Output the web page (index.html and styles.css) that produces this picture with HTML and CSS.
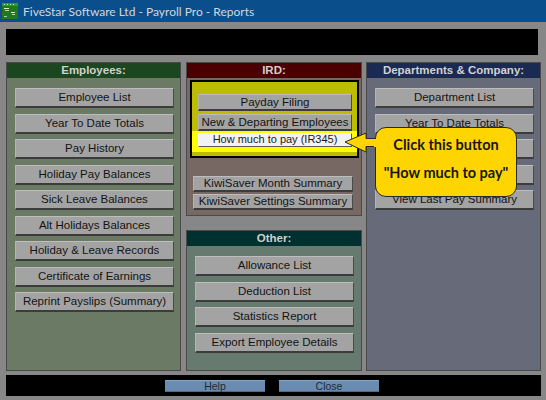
FILE: index.html
```html
<!DOCTYPE html>
<html>
<head>
<meta charset="utf-8">
<link rel="stylesheet" href="styles.css">
</head>
<body>
<div class="window">
  <div class="titlebar">
    <svg class="appicon" width="16" height="16" viewBox="0 0 16 16">
      <rect x="0" y="0" width="16" height="16" fill="#1f7a1f"/>
      <rect x="0" y="0" width="16" height="3" fill="#2f9a2f"/>
      <rect x="2" y="1" width="1" height="1" fill="#cfe8cf"/>
      <rect x="5" y="1" width="1" height="1" fill="#cfe8cf"/>
      <rect x="8" y="1" width="1" height="1" fill="#cfe8cf"/>
      <rect x="11" y="1" width="1" height="1" fill="#cfe8cf"/>
      <rect x="2" y="5" width="5" height="1" fill="#d8ecd8"/>
      <rect x="3" y="7" width="4" height="1" fill="#b8d8b8"/>
      <rect x="9" y="9" width="4" height="1" fill="#d8ecd8"/>
      <rect x="10" y="11" width="3" height="1" fill="#b8d8b8"/>
      <rect x="2" y="13" width="3" height="1" fill="#a8cca8"/>
    </svg>
    <span class="title">FiveStar Software Ltd - Payroll Pro - Reports</span>
  </div>
  <div class="content">
    <div class="topbar"></div>
    <div class="columns">
      <section class="panel emp">
        <div class="phead">Employees:</div>
        <div class="pbody list">
          <div class="btn">Employee List</div>
          <div class="btn">Year To Date Totals</div>
          <div class="btn">Pay History</div>
          <div class="btn">Holiday Pay Balances</div>
          <div class="btn">Sick Leave Balances</div>
          <div class="btn">Alt Holidays Balances</div>
          <div class="btn">Holiday &amp; Leave Records</div>
          <div class="btn">Certificate of Earnings</div>
          <div class="btn">Reprint Payslips (Summary)</div>
        </div>
      </section>
      <div class="midcol">
        <section class="panel ird">
          <div class="phead">IRD:</div>
          <div class="ybox">
            <div class="btn sm">Payday Filing</div>
            <div class="btn sm">New &amp; Departing Employees</div>
            <div class="band">
              <div class="btn hl">How much to pay (IR345)</div>
            </div>
          </div>
          <div class="kiwi">
            <div class="btn ks">KiwiSaver Month Summary</div>
            <div class="btn ks">KiwiSaver Settings Summary</div>
          </div>
        </section>
        <section class="panel other">
          <div class="phead">Other:</div>
          <div class="pbody list">
            <div class="btn">Allowance List</div>
            <div class="btn">Deduction List</div>
            <div class="btn">Statistics Report</div>
            <div class="btn">Export Employee Details</div>
          </div>
        </section>
      </div>
      <section class="panel dept">
        <div class="phead">Departments &amp; Company:</div>
        <div class="pbody list">
          <div class="btn">Department List</div>
          <div class="btn">Year To Date Totals</div>
          <div class="btn"></div>
          <div class="btn"></div>
          <div class="btn">View Last Pay Summary</div>
        </div>
      </section>
    </div>
    <div class="bottombar">
      <div class="fbtn help">Help</div>
      <div class="fbtn close">Close</div>
    </div>
  </div>

  <svg class="arrow" width="36" height="26" viewBox="0 0 36 26">
    <polygon points="2,12 23,3 23,8.5 34,8.5 34,16.5 23,16.5 23,22" fill="#ffd500" stroke="#2a2a2a" stroke-width="1" stroke-linejoin="miter"/>
  </svg>
  <div class="callout">
    <div class="c1">Click this button</div>
    <div class="c2">"How much to pay"</div>
  </div>
  <svg class="arrowjoin" width="6" height="8" viewBox="0 0 6 8"><rect width="6" height="8" fill="#ffd500"/></svg>
</div>
</body>
</html>
```
FILE: styles.css
```css
* { box-sizing: border-box; }
html, body { margin: 0; padding: 0; }
body {
  width: 546px;
  height: 400px;
  background: #878787;
  font-family: "Liberation Sans", Arial, sans-serif;
  overflow: hidden;
}
.window {
  position: relative;
  width: 546px;
  height: 400px;
}
.titlebar {
  height: 22px;
  background: #0a4e8b;
  display: flex;
  align-items: center;
  padding-left: 2px;
}
.appicon { display: block; margin-right: 5px; }
.title {
  font-family: "Lato", "Open Sans", sans-serif;
  font-size: 12px;
  color: #d2d6da;
}
.content {
  padding: 0 5px 0 6px;
}
.topbar {
  margin-top: 7px;
  height: 26px;
  width: 532px;
  background: #000;
}
.columns {
  margin-top: 7px;
  height: 309px;
  display: flex;
  gap: 5px;
}
.panel {
  border: 1px solid #4a4a4a;
  display: flex;
  flex-direction: column;
}
.phead {
  height: 15px;
  font-weight: bold;
  font-size: 11.5px;
  line-height: 15px;
  text-align: center;
  color: #cfd2cf;
}
.emp { width: 175px; background: #6a7a64; }
.emp .phead { background: #1b4620; }
.dept { width: 175px; background: #676b79; margin-left: -1px; }
.dept .phead { background: #1b2a52; }
.midcol {
  width: 176px;
  display: flex;
  flex-direction: column;
  gap: 14px;
}
.ird { height: 154px; background: #786864; }
.ird .phead { background: #4a0000; }
.other { height: 141px; background: #667a70; }
.other .phead { background: #003030; }

.list {
  padding: 10px 6px 0 8px;
  display: flex;
  flex-direction: column;
  gap: 5.5px;
}
.btn {
  background: #a3a3a3;
  border-top: 1px solid #bdbdbd;
  border-left: 1px solid #b4b4b4;
  border-right: 1px solid #4a4a4a;
  border-bottom: 2px solid #3c3c3c;
  color: #131313;
  font-size: 11.5px;
  text-align: center;
  white-space: nowrap;
}
.list .btn {
  width: 159px;
  height: 20px;
  line-height: 17px;
}
.ybox {
  margin: 2px 2px 0 3px;
  height: 78px;
  border: 2px solid #000;
  background: #bdbd00;
  padding-top: 12px;
  display: flex;
  flex-direction: column;
}
.btn.sm {
  margin-left: 6px;
  width: 154px;
  height: 17px;
  line-height: 14px;
}
.btn.sm + .btn.sm { margin-top: 3px; }
.band {
  height: 21px;
  background: #ffff00;
  padding: 2px 0 0 6px;
}
.btn.hl {
  width: 154px;
  height: 14px;
  line-height: 11px;
  background: #f2f2f2;
  border-top: 1px solid #ffffff;
  border-left: 1px solid #ffffff;
  border-right: 1px solid #5a5a5a;
  border-bottom: 1px solid #5a5a5a;
  color: #1a1a1a;
  font-size: 11px;
}
.kiwi {
  margin-top: 18px;
  padding-left: 6px;
  display: flex;
  flex-direction: column;
  gap: 2px;
}
.btn.ks {
  width: 160px;
  height: 16px;
  line-height: 13px;
}
.bottombar {
  margin-top: 4px;
  height: 21px;
  background: #000;
  display: flex;
  align-items: flex-start;
  padding: 5px 0 0 159px;
  gap: 14px;
}
.fbtn {
  width: 100px;
  height: 12px;
  background: #6a8cb1;
  border-top: 1px solid #86a4c4;
  border-bottom: 1px solid #4d6a8a;
  font-size: 10.5px;
  line-height: 10px;
  text-align: center;
  color: #1e2a36;
}

/* overlay callout */
.callout {
  position: absolute;
  left: 375px;
  top: 127px;
  width: 142px;
  height: 70px;
  background: #ffd500;
  border: 1px solid #2a2a2a;
  border-radius: 11px;
  text-align: center;
  font-family: "Lato", "Open Sans", sans-serif;
  font-weight: bold;
  color: #161616;
  font-size: 14.5px;
}
.c1 { margin-top: 8px; line-height: 18px; }
.c2 { margin-top: 10px; line-height: 18px; }
.arrow {
  position: absolute;
  left: 343px;
  top: 130px;
}
.arrowjoin {
  position: absolute;
  left: 374px;
  top: 139px;
}
```
